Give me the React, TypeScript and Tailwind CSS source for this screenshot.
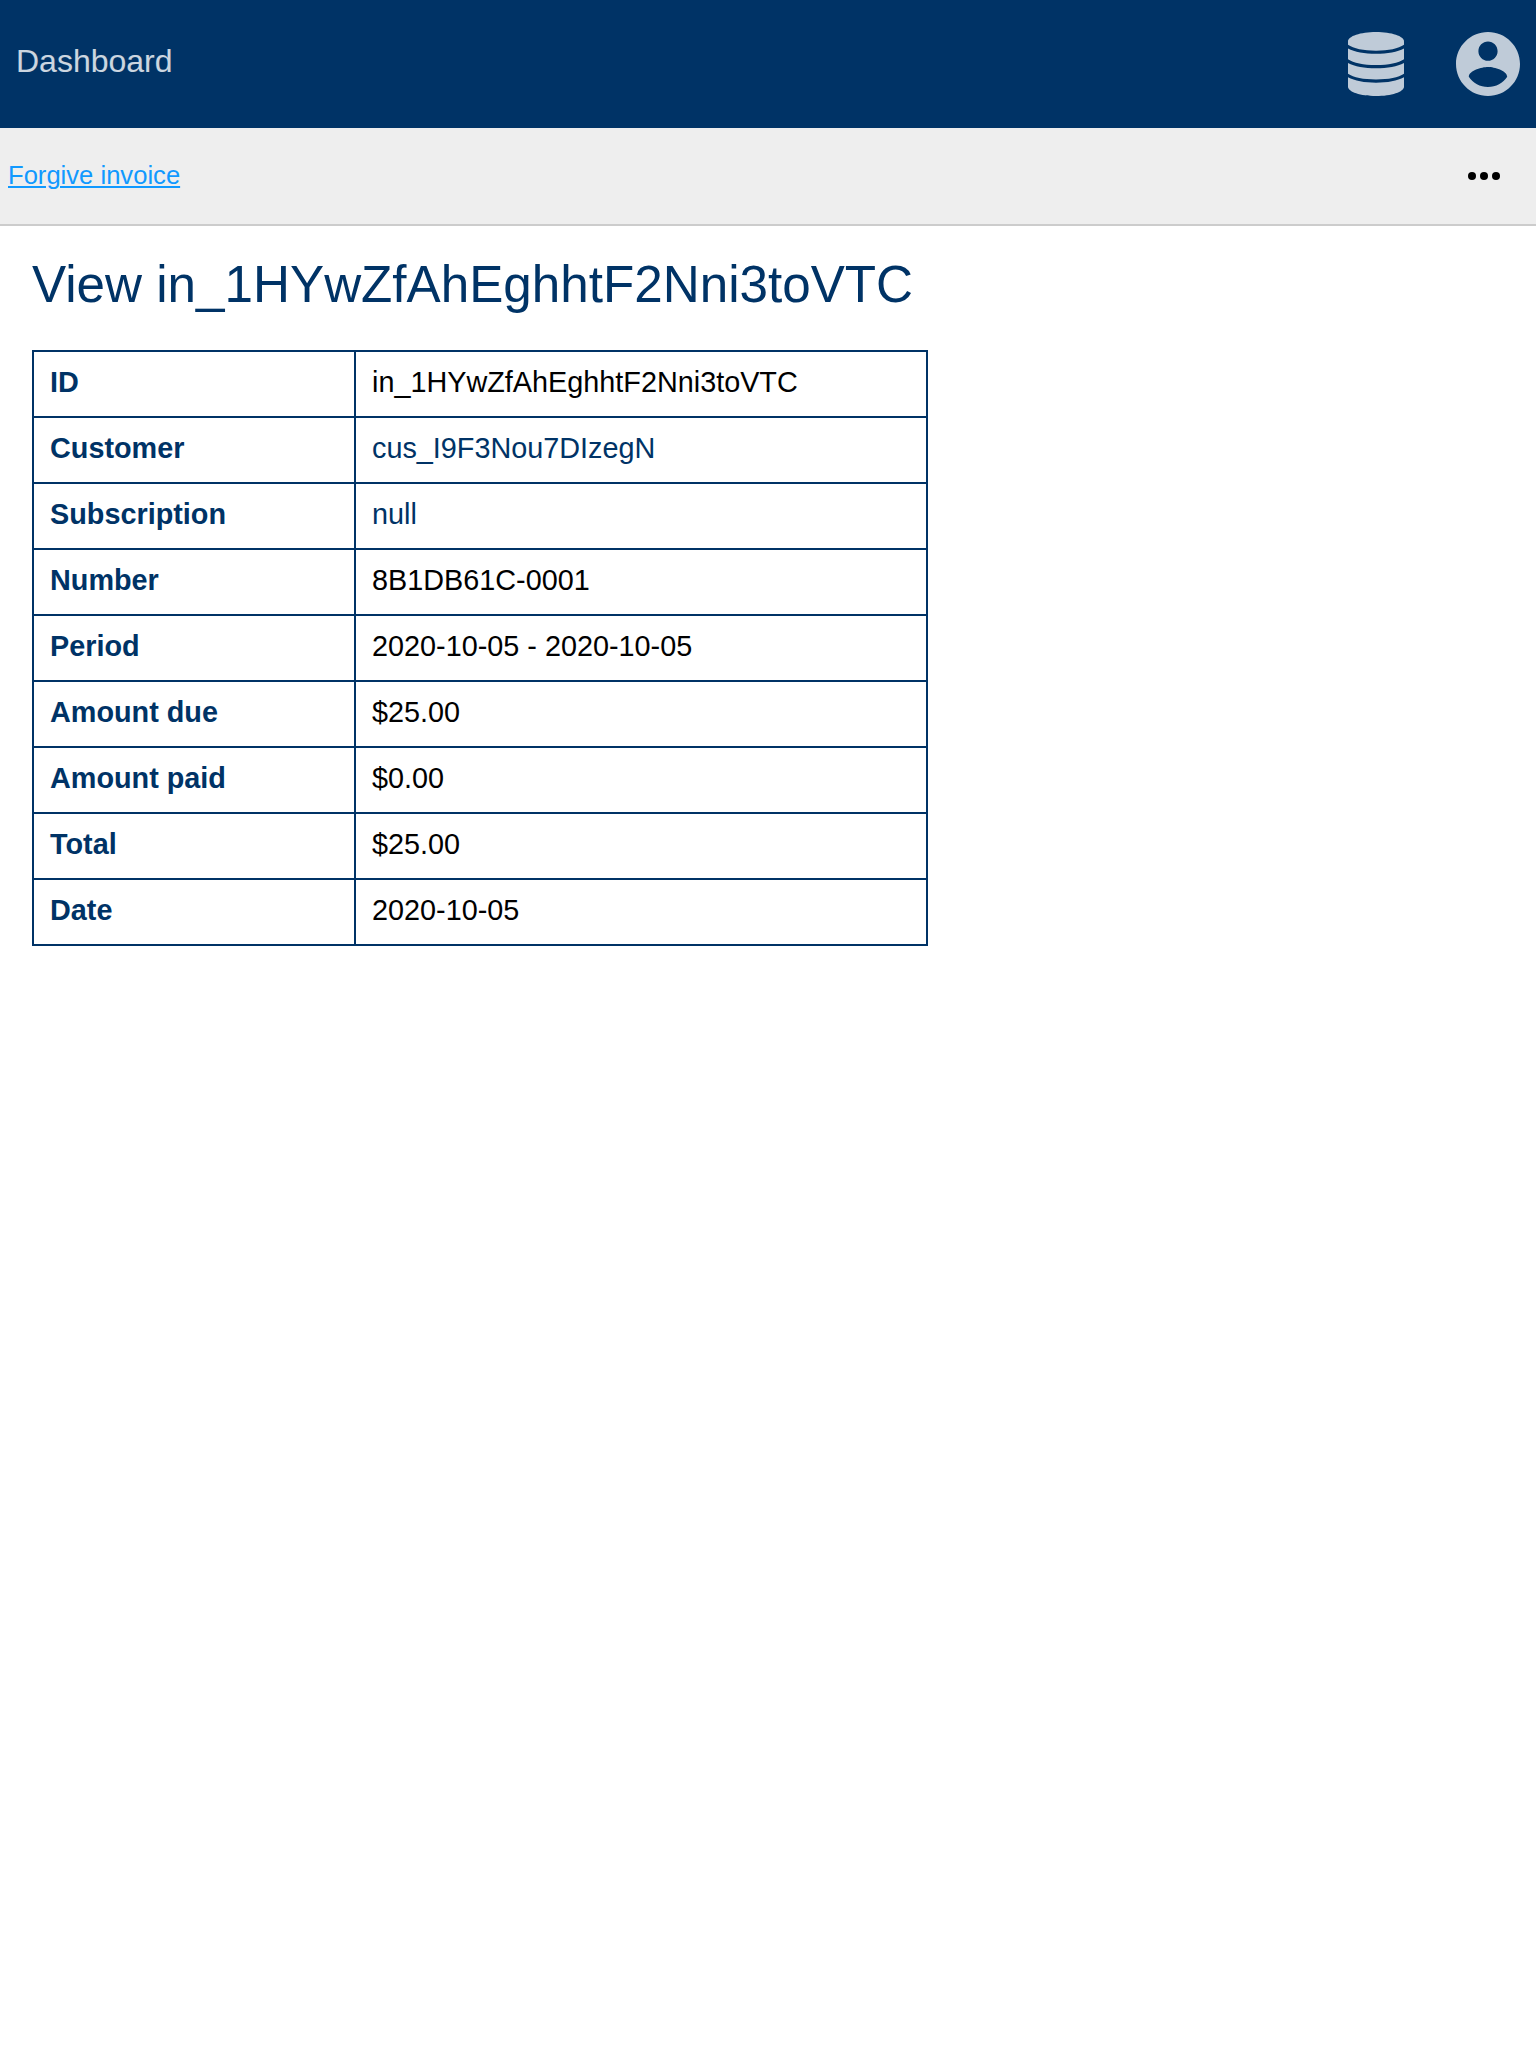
const rows: { label: string; value: string; link?: boolean }[] = [
  { label: 'ID', value: 'in_1HYwZfAhEghhtF2Nni3toVTC' },
  { label: 'Customer', value: 'cus_I9F3Nou7DIzegN', link: true },
  { label: 'Subscription', value: 'null', link: true },
  { label: 'Number', value: '8B1DB61C-0001' },
  { label: 'Period', value: '2020-10-05 - 2020-10-05' },
  { label: 'Amount due', value: '$25.00' },
  { label: 'Amount paid', value: '$0.00' },
  { label: 'Total', value: '$25.00' },
  { label: 'Date', value: '2020-10-05' },
];

function DatabaseIcon() {
  return (
    <svg viewBox="0 0 56 64" className="h-16 w-14" fill="currentColor" aria-hidden="true">
      <path d="M28 0C43.500 0 56 4.200 56 9.300V12.800C50.500 16.600 40.500 18.700 28 18.700S5.500 16.600 0 12.800V9.300C0 4.200 12.500 0 28 0z" />
      <path d="M0 16.500C6.500 20 16.500 21.800 28 21.800S49.500 20 56 16.500V27.200C50.500 31 40.500 33 28 33S5.500 31 0 27.200z" />
      <path d="M0 30.900C6.500 34.400 16.500 36.200 28 36.200S49.500 34.400 56 30.900V41.800C50.500 45.500 40.500 47.500 28 47.500S5.500 45.500 0 41.800z" />
      <path d="M0 45.300C6.500 48.900 16.500 50.700 28 50.700S49.500 48.900 56 45.300V54.700C56 59.800 43.500 64 28 64S0 59.800 0 54.700z" />
    </svg>
  );
}

function AccountIcon() {
  return (
    <svg viewBox="2 2 20 20" className="size-16" fill="currentColor" aria-hidden="true">
      <path d="M12 2C6.480 2 2 6.480 2 12s4.480 10 10 10 10-4.480 10-10S17.520 2 12 2zm0 3c1.660 0 3 1.340 3 3s-1.340 3-3 3-3-1.340-3-3 1.340-3 3-3zm0 14.200c-2.500 0-4.710-1.280-6-3.220.030-1.990 4-3.080 6-3.080 1.990 0 5.970 1.090 6 3.080-1.290 1.940-3.500 3.220-6 3.220z" />
    </svg>
  );
}

function MoreIcon() {
  return (
    <svg viewBox="0 0 24 24" className="size-12" fill="currentColor" aria-hidden="true">
      <circle cx="6" cy="12" r="2" />
      <circle cx="12" cy="12" r="2" />
      <circle cx="18" cy="12" r="2" />
    </svg>
  );
}

export default function App() {
  return (
    <div className="min-h-[2048px] bg-white font-['Liberation_Sans',Arial,sans-serif] text-black">
      <header className="flex h-32 items-center justify-between bg-[#003366] px-4">
        <a href="#" className="pb-1.5 text-[32px] leading-[38px] text-white/80">
          Dashboard
        </a>
        <div className="flex items-center gap-[52px] text-white/75">
          <DatabaseIcon />
          <AccountIcon />
        </div>
      </header>

      <nav className="flex h-[98px] items-center justify-between border-b-2 border-[#cccccc] bg-[#eeeeee] pr-7 pl-2">
        <a
          href="#"
          className="pb-0.5 text-[25.6px] leading-[30px] text-[#1199ff] underline decoration-2 underline-offset-2"
        >
          Forgive invoice
        </a>
        <MoreIcon />
      </nav>

      <main className="px-8 pt-[29px]">
        <h1 className="text-[51.2px] leading-[60px] text-[#003366]">View in_1HYwZfAhEghhtF2Nni3toVTC</h1>
        <table className="mt-[35px] w-[896px] table-fixed border-collapse border-2 border-[#003366] text-left text-[28.8px] leading-8">
          <tbody>
            {rows.map((row) => (
              <tr key={row.label}>
                <th className="w-[322px] border-2 border-[#003366] px-4 pt-3.5 pb-[18px] font-bold text-[#003366]">
                  {row.label}
                </th>
                <td className="border-2 border-[#003366] px-4 pt-3.5 pb-[18px]">
                  {row.link ? (
                    <a href="#" className="text-[#003366]">
                      {row.value}
                    </a>
                  ) : (
                    row.value
                  )}
                </td>
              </tr>
            ))}
          </tbody>
        </table>
      </main>
    </div>
  );
}
